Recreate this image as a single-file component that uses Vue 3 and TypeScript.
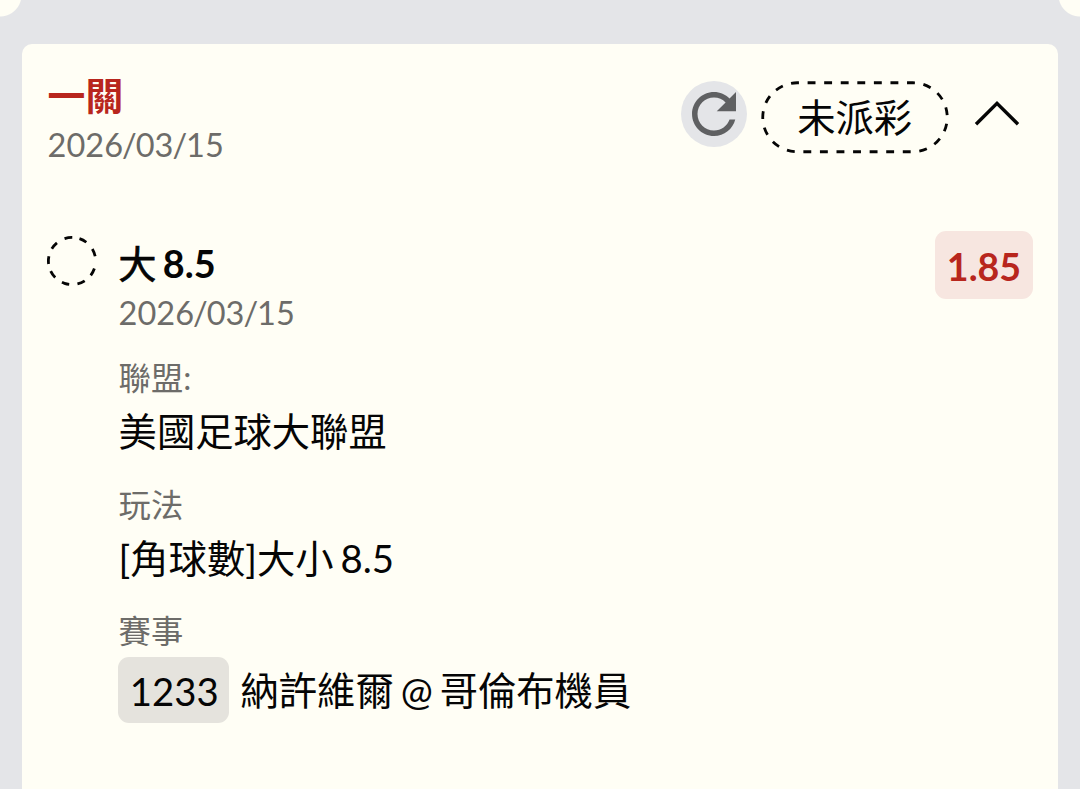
<script setup lang="ts">
interface Field {
  label: string
  value: string
  code?: string
}

const ticket = { title: '一關', date: ['2026', '03', '15'], status: '未派彩' }
const pick = { side: '大', line: '8.5', date: ['2026', '03', '15'], odds: '1.85' }

const fields: Field[] = [
  { label: '聯盟:', value: '美國足球大聯盟' },
  { label: '玩法', value: '[角球數]大小 8.5' },
  { label: '賽事', value: '納許維爾 @ 哥倫布機員', code: '1233' },
]
</script>

<template>
  <main class="page">
    <div class="previous"></div>
    <article class="card">
      <header class="head">
        <div class="heading">
          <h1 class="title">{{ ticket.title }}</h1>
          <p class="date">
            <template v-for="(part, i) in ticket.date" :key="i"><span v-if="i" class="slash">/</span>{{ part }}</template>
          </p>
        </div>
        <div class="actions">
          <button class="refresh" type="button" aria-label="refresh">
            <svg viewBox="0 0 24 24" width="66" height="66">
              <path
                d="M17.65 6.35C16.2 4.9 14.21 4 12 4c-4.42 0-7.99 3.58-7.99 8s3.57 8 7.99 8c3.73 0 6.84-2.55 7.73-6h-2.08c-.82 2.33-3.04 4-5.65 4-3.31 0-6-2.69-6-6s2.69-6 6-6c1.66 0 3.14.69 4.22 1.78L13 11h7V4l-2.35 2.35z"
              />
            </svg>
          </button>
          <div class="status">
            <svg class="outline" viewBox="0 0 188 73" width="188" height="73">
              <rect x="1.75" y="1.75" width="184.5" height="69" rx="34.5" pathLength="453.6" />
            </svg>
            <span class="status-text">{{ ticket.status }}</span>
          </div>
          <svg class="chevron" viewBox="0 0 46 28" width="46" height="28">
            <path d="M2 24.2 L23 3.4 L44 24.2" />
          </svg>
        </div>
      </header>

      <section class="pick">
        <svg class="marker" viewBox="0 0 52 52" width="52" height="52">
          <circle cx="26" cy="26" r="23.6" pathLength="360" transform="rotate(18.5 26 26)" />
        </svg>
        <div class="body">
          <div class="pick-head">
            <div>
              <h2 class="name"><span class="side">{{ pick.side }}</span> {{ pick.line }}</h2>
              <p class="date">
                <template v-for="(part, i) in pick.date" :key="i"><span v-if="i" class="slash">/</span>{{ part }}</template>
              </p>
            </div>
            <span class="odds">{{ pick.odds }}</span>
          </div>
          <dl class="fields">
            <div v-for="field in fields" :key="field.label" class="field">
              <dt class="label">{{ field.label }}</dt>
              <dd class="value" :class="{ coded: field.code }">
                <span v-if="field.code" class="code">{{ field.code }}</span>
                <span>{{ field.value }}</span>
              </dd>
            </div>
          </dl>
        </div>
      </section>
    </article>
  </main>
</template>

<style>
body {
  margin: 0;
  background: #e4e5e8;
}
</style>

<style scoped>
.page {
  box-sizing: border-box;
  height: 789px;
  overflow: hidden;
  background: #e4e5e8;
  color: #050505;
  font-family: Lato, "Noto Sans CJK TC", sans-serif;
  font-size: 38.3px;
  word-spacing: -2.8px;
}

h1,
h2,
p,
dl,
dd {
  margin: 0;
}

.previous {
  height: 44px;
  background:
    radial-gradient(circle at 0 -5px, #fffef5 21px, transparent 22px),
    radial-gradient(circle at 1080px -5px, #fffef5 21px, transparent 22px);
}

.card {
  box-sizing: border-box;
  height: 760px;
  margin: 0 22px;
  padding: 28px 25px 0 25.6px;
  border-radius: 10px;
  background: #fffef5;
}

.head {
  display: flex;
  justify-content: space-between;
  height: 158px;
}

.title {
  height: 50px;
  color: #b8261d;
  font-size: 37.8px;
  font-weight: 700;
  line-height: 48px;
}

.date {
  height: 46px;
  color: #6d6c69;
  font-size: 32.5px;
  line-height: 46px;
}

.slash {
  margin: 0 -1px;
}

.actions {
  display: flex;
  align-items: flex-start;
  padding: 9px 13px 0 0;
}

.refresh {
  width: 66px;
  height: 66px;
  margin: 0.3px 13.3px 0 0;
  padding: 0;
  border: 0;
  border-radius: 50%;
  background: #e4e5e8;
}

.refresh svg {
  display: block;
  fill: #5f6062;
}

.status {
  position: relative;
  width: 188px;
  height: 73px;
  margin-right: 25.4px;
  text-align: center;
  line-height: 73px;
}

.outline {
  position: absolute;
  inset: 0;
}

.outline rect {
  fill: none;
  stroke: #050505;
  stroke-width: 2.8;
  stroke-dasharray: 8 8.8;
  stroke-dashoffset: 6.3;
}

.chevron {
  margin-top: 19px;
}

.chevron path {
  fill: none;
  stroke: #050505;
  stroke-width: 3.4;
}

.pick {
  display: flex;
  gap: 21px;
}

.marker {
  flex: none;
  margin: 5px 0 0 -2px;
}

.marker circle {
  fill: none;
  stroke: #050505;
  stroke-width: 2.8;
  stroke-dasharray: 19 20 19 20 19 20 19 18 19 20 19 21 19 18 19 22 19 30;
}

.body {
  flex: 1;
}

.pick-head {
  display: flex;
  align-items: flex-start;
  justify-content: space-between;
  height: 126px;
}

.name {
  height: 60px;
  font-size: 37.8px;
  font-weight: 700;
  line-height: 68px;
}

.side {
  font-weight: 400;
  -webkit-text-stroke: 0.8px currentColor;
}

.odds {
  width: 98px;
  height: 68px;
  margin-top: 1px;
  border-radius: 11px;
  background: #f7e6e0;
  color: #b8261d;
  font-size: 37.6px;
  font-weight: 700;
  line-height: 71px;
  text-align: center;
}

.field {
  height: 126.5px;
}

.label {
  height: 46px;
  color: #6d6c69;
  font-size: 32.3px;
  line-height: 44px;
}

.value {
  display: flex;
  align-items: center;
  gap: 11.5px;
  height: 58px;
  line-height: 58px;
  white-space: nowrap;
}

.value.coded {
  height: 70px;
}

.code {
  box-sizing: border-box;
  width: 111px;
  height: 66px;
  margin-left: -0.6px;
  padding-left: 1.5px;
  border-radius: 11px;
  background: #e5e3dd;
  line-height: 68px;
  text-align: center;
}
</style>
